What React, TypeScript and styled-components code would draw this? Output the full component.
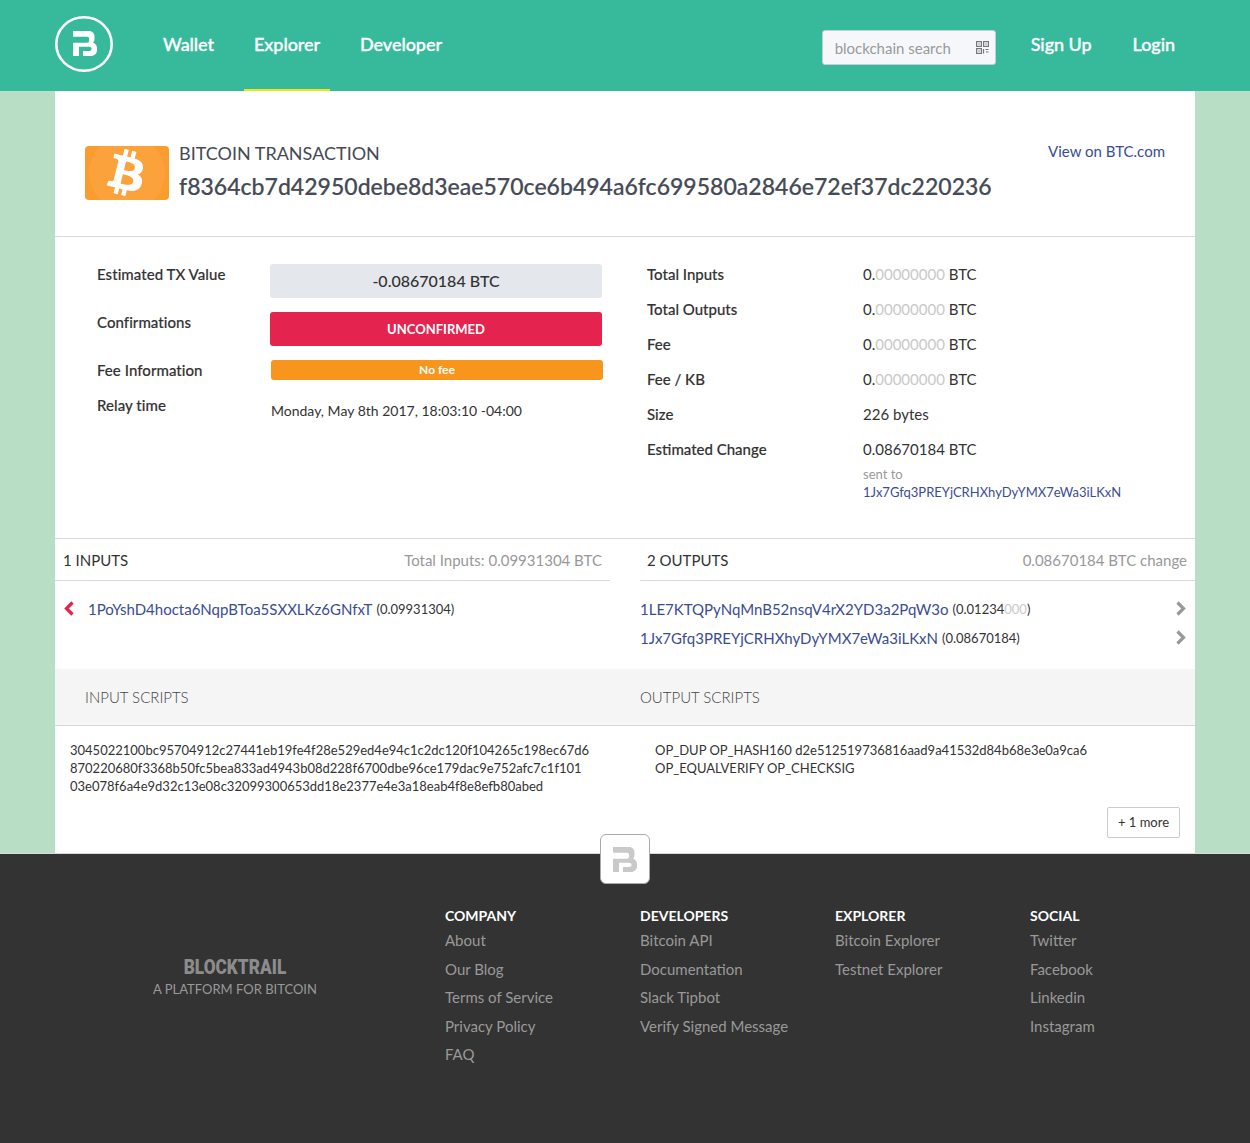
import React from "react";
import styled, { createGlobalStyle } from "styled-components";
import { FaBtc } from "react-icons/fa";

const Global = createGlobalStyle`
  html, body { margin: 0; padding: 0; background: #b8dfc5; }
  body { font-family: Lato, "Open Sans", sans-serif; color: #333; font-size: 15px; }
  * { box-sizing: border-box; }
  a { text-decoration: none; color: inherit; }
`;

const Header = styled.header`
  height: 91px; background: #37b99c; display: flex; align-items: stretch;
  padding: 0 55px; color: #fff;
`;
const LogoMark = styled.a`display: flex; align-items: center; width: 58px; margin-right: 40px; padding-bottom: 3px;`;
const Nav = styled.nav`display: flex; align-items: stretch; gap: 20px;`;
const NavLink = styled.a<{ $active?: boolean }>`
  display: flex; align-items: center; padding: 0 10px 2px; font-size: 18px; font-weight: 500;
  letter-spacing: -0.05px;
  -webkit-text-stroke: 0.35px #fff;
  border-bottom: 2px solid ${p => (p.$active ? "#e8e81a" : "transparent")};
  color: #fff;
`;
const HeaderRight = styled.div`margin-left: auto; display: flex; align-items: stretch; gap: 21px; margin-right: 10px;`;
const Search = styled.div`
  align-self: flex-start; margin: 30px 4px 0 0; width: 174px; height: 35px; background: #f5f7fb;
  border: 1px solid #c8ccd0; border-radius: 3px; display: flex; align-items: center;
  justify-content: space-between; padding: 0 6px 0 12px; font-size: 15px; color: #9a9a9a;
`;

const Main = styled.main`width: 1140px; margin: 0 auto; background: #fff;`;
const TitleBar = styled.section`
  height: 146px; border-bottom: 1px solid #d9d9d9; display: flex; align-items: flex-start;
  padding: 51px 30px 0;
`;
const CoinBadge = styled.div`
  width: 84px; height: 54px; margin-top: 4px; border-radius: 4px; background: #fa9c2e;
  display: flex; align-items: center; justify-content: center; color: #fff; font-size: 46px;
  overflow: hidden; position: relative; margin-right: 10px;
  &::before { content: ""; position: absolute; width: 76px; height: 76px; border-radius: 50%; background: #fba23c; top: -11px; left: 4px; }
  svg { position: relative; transform: rotate(14deg); }
`;
const TitleText = styled.div`flex: 1;`;
const Kicker = styled.div`font-size: 18px; line-height: 22px; color: #454a56;`;
const TxHash = styled.div`font-size: 23px; line-height: 30px; font-weight: 500; color: #454a56; margin-top: 7px; letter-spacing: 0.02px; -webkit-text-stroke: 0.2px #454a56;`;
const Link = styled.a`color: #3a4d92;`;
const ViewLink = styled(Link)`font-size: 15px; line-height: 20px; margin-top: -1px;`;

const Details = styled.section`display: grid; grid-template-columns: 555px 555px; gap: 30px; height: 301px; padding-top: 27px;`;
const LeftDetails = styled.div`display: flex; flex-direction: column; padding-left: 42px;`;
const LeftRow = styled.div<{ $h: number }>`display: grid; grid-template-columns: 173px 332px; height: ${p => p.$h}px;`;
const Label = styled.div`font-size: 15px; line-height: 22px; font-weight: 500; color: #333; -webkit-text-stroke: 0.15px #333;`;
const LeftLabel = styled(Label)`margin-top: -1px; letter-spacing: 0.05px;`;
const Pill = styled.div<{ $bg: string; $fg: string; $bold?: boolean; $size: number; $h: number; $shift?: number; $lift: number }>`
  background: ${p => p.$bg}; color: ${p => p.$fg}; height: ${p => p.$h}px; border-radius: 3px;
  display: flex; align-items: center; justify-content: center; font-size: ${p => p.$size}px;
  font-weight: ${p => (p.$bold ? 700 : 500)}; margin-left: ${p => p.$shift ?? 0}px;
  width: 332px; padding-bottom: ${p => p.$lift}px;
`;
const Relay = styled.div`font-size: 14px; line-height: 20px; margin: 6px 0 0 1px; color: #333;`;

const RightDetails = styled.div`padding-left: 7px; margin-top: -1px; display: flex; flex-direction: column;`;
const RightRow = styled.div`display: grid; grid-template-columns: 216px 1fr; height: 35px; align-items: start;`;
const Value = styled.div`font-size: 15px; line-height: 22px; color: #333;`;
const Faint = styled.span`color: #c9c9c9;`;
const Sent = styled.div`margin-left: 216px; font-size: 13px; line-height: 17px; color: #999; margin-top: -7px;`;
const SentLink = styled(Link)`display: block; font-size: 13px; line-height: 17px; margin-top: 1px;`;

const Columns = styled.section`display: grid; grid-template-columns: 555px 555px; gap: 30px; border-top: 1px solid #d9d9d9; height: 131px;`;
const ColumnHead = styled.div<{ $pad: number }>`
  height: 42px; border-bottom: 1px solid #d9d9d9; display: flex; align-items: center;
  justify-content: space-between; padding: 1px 8px 0 ${p => p.$pad}px; font-size: 15px; color: #333;
`;
const HeadNote = styled.span`color: #999; font-size: 15px;`;
const Rows = styled.div`padding-top: 13px; display: flex; flex-direction: column;`;
const TxRow = styled.div`display: flex; align-items: center; height: 29px; font-size: 13px; color: #333;`;
const Address = styled(Link)`font-size: 15px; margin-right: 4px;`;
const ArrowLeft = styled.span`display: flex; width: 33px; padding-left: 9px;`;
const ArrowRight = styled.span`display: flex; margin-left: auto; margin-right: 9px;`;

const ScriptHead = styled.section`
  display: grid; grid-template-columns: 555px 555px; gap: 30px; height: 57px; background: #f5f5f5;
  border-bottom: 1px solid #d9d9d9; font-size: 15px; font-weight: 300; color: #444;
`;
const ScriptTitle = styled.div<{ $pad: number }>`padding-left: ${p => p.$pad}px; display: flex; align-items: center;`;
const Scripts = styled.section`display: grid; grid-template-columns: 555px 555px; gap: 30px; height: 127px; position: relative; padding-top: 15px;`;
const ScriptText = styled.div<{ $pad: number }>`padding-left: ${p => p.$pad}px; font-size: 13px; line-height: 18px; color: #333;`;
const ScriptLine = styled.div`white-space: nowrap;`;
const MoreWrap = styled.div`position: absolute; right: 15px; top: 81px;`;
const More = styled.button`
  width: 73px; height: 31px; background: #fff; border: 1px solid #ccc; border-radius: 2px;
  font: 13px Lato, sans-serif; color: #333; padding: 0 0 2px;
`;

const Footer = styled.footer`
  height: 290px; background: #333; border-top: 1px solid #d9d9d9; position: relative;
  display: grid; grid-template-columns: 360px repeat(4, 195px); padding: 52px 0 0 85px;
`;
const Badge = styled.div`
  position: absolute; left: 600px; top: -20px; width: 50px; height: 50px; background: #fff;
  border: 1px solid #aaa; border-radius: 6px; display: flex; align-items: center; justify-content: center;
`;
const Brand = styled.div`width: 300px; margin-top: 49px; text-align: center; color: #999;`;
const BrandName = styled.div`
  font: 900 21px/24px Roboto, sans-serif; color: #8c8c8c; transform: scaleX(0.82);
`;
const BrandTag = styled.div`font-size: 13px; line-height: 20px; color: #999;`;
const FootCol = styled.div`display: flex; flex-direction: column;`;
const FootHead = styled.div`font-size: 14px; line-height: 20px; font-weight: 700; color: #fff; height: 20px;`;
const FootLink = styled.a`font-size: 15px; line-height: 28.5px; color: #999;`;

const B_PATH = "M0 0H16C19.500 0 21.500 2.500 21.500 5.500V8C21.500 9.500 21 10.500 20 11.500C22.500 12.500 24 14.500 24 17V19C24 22.500 21.500 25 18 25H10V20H16C17.500 20 18.500 19 18.500 18V17.500C18.500 16.500 17.500 15.700 16 15.700H6V25H0V11.700H14C15.300 11.700 16 11 16 9.800V7.500C16 6.500 15.300 5.700 14 5.700H0Z";

const BMark = ({ color }: { color: string }) => (
  <svg width="24" height="25" viewBox="0 0 24 25" fill={color}>
    <path d={B_PATH} />
  </svg>
);

const Chevron = ({ dir, color }: { dir: "left" | "right"; color: string }) => (
  <svg width="10" height="15" viewBox="0 0 10 15" fill="none" stroke={color} strokeWidth="3.200">
    <path d={dir === "left" ? "M8.500 1.500L2.500 7.500L8.500 13.500" : "M1.500 1.500L7.500 7.500L1.500 13.500"} />
  </svg>
);

const Qr = () => (
  <svg width="13" height="13" viewBox="0 0 13 13" fill="none" stroke="#777" strokeWidth="1.200">
    <rect x="0.600" y="0.600" width="4.800" height="4.800" />
    <rect x="7.600" y="0.600" width="4.800" height="4.800" />
    <rect x="0.600" y="7.600" width="4.800" height="4.800" />
    <rect x="2.400" y="2.400" width="1.200" height="1.200" fill="#777" stroke="none" />
    <rect x="9.400" y="2.400" width="1.200" height="1.200" fill="#777" stroke="none" />
    <rect x="2.400" y="9.400" width="1.200" height="1.200" fill="#777" stroke="none" />
    <path d="M7.500 8v4.500M9.500 8.500h3M10 11h2.500" />
  </svg>
);

const Zeros = () => (<>0.<Faint>00000000</Faint> BTC</>);

const rightRows: [string, React.ReactNode][] = [
  ["Total Inputs", <Zeros />],
  ["Total Outputs", <Zeros />],
  ["Fee", <Zeros />],
  ["Fee / KB", <Zeros />],
  ["Size", "226 bytes"],
  ["Estimated Change", "0.08670184 BTC"],
];

const footer = [
  { head: "COMPANY", links: ["About", "Our Blog", "Terms of Service", "Privacy Policy", "FAQ"] },
  { head: "DEVELOPERS", links: ["Bitcoin API", "Documentation", "Slack Tipbot", "Verify Signed Message"] },
  { head: "EXPLORER", links: ["Bitcoin Explorer", "Testnet Explorer"] },
  { head: "SOCIAL", links: ["Twitter", "Facebook", "Linkedin", "Instagram"] },
];

export default function App() {
  return (
    <>
      <Global />
      <Header>
        <LogoMark href="#">
          <svg width="58" height="56" viewBox="0 0 58 56">
            <ellipse cx="29" cy="28" rx="27.700" ry="26.700" fill="none" stroke="#fff" strokeWidth="2.600" />
            <path transform="translate(18 15)" fill="#fff" d={B_PATH} />
          </svg>
        </LogoMark>
        <Nav>
          <NavLink href="#">Wallet</NavLink>
          <NavLink href="#" $active>Explorer</NavLink>
          <NavLink href="#">Developer</NavLink>
        </Nav>
        <HeaderRight>
          <Search>blockchain search<Qr /></Search>
          <NavLink href="#">Sign Up</NavLink>
          <NavLink href="#">Login</NavLink>
        </HeaderRight>
      </Header>
      <Main>
        <TitleBar>
          <CoinBadge><FaBtc /></CoinBadge>
          <TitleText>
            <Kicker>BITCOIN TRANSACTION</Kicker>
            <TxHash>f8364cb7d42950debe8d3eae570ce6b494a6fc699580a2846e72ef37dc220236</TxHash>
          </TitleText>
          <ViewLink href="#">View on BTC.com</ViewLink>
        </TitleBar>
        <Details>
          <LeftDetails>
            <LeftRow $h={48}>
              <LeftLabel>Estimated TX Value</LeftLabel>
              <Pill $bg="#e4e7ec" $fg="#333" $size={16} $h={34} $lift={2}>-0.08670184 BTC</Pill>
            </LeftRow>
            <LeftRow $h={48}>
              <LeftLabel>Confirmations</LeftLabel>
              <Pill $bg="#e5234f" $fg="#fff" $bold $size={13} $h={34} $lift={0}>UNCONFIRMED</Pill>
            </LeftRow>
            <LeftRow $h={35}>
              <LeftLabel>Fee Information</LeftLabel>
              <Pill $bg="#f8951d" $fg="#fff" $bold $size={12} $h={20} $shift={1} $lift={2}>No fee</Pill>
            </LeftRow>
            <LeftRow $h={40}>
              <LeftLabel>Relay time</LeftLabel>
              <Relay>Monday, May 8th 2017, 18:03:10 -04:00</Relay>
            </LeftRow>
          </LeftDetails>
          <RightDetails>
            {rightRows.map(([label, value]) => (
              <RightRow key={label}>
                <Label>{label}</Label>
                <Value>{value}</Value>
              </RightRow>
            ))}
            <Sent>
              sent to
              <SentLink href="#">1Jx7Gfq3PREYjCRHXhyDyYMX7eWa3iLKxN</SentLink>
            </Sent>
          </RightDetails>
        </Details>
        <Columns>
          <div>
            <ColumnHead $pad={8}>
              <span>1 INPUTS</span>
              <HeadNote>Total Inputs: 0.09931304 BTC</HeadNote>
            </ColumnHead>
            <Rows>
              <TxRow>
                <ArrowLeft><Chevron dir="left" color="#e5234f" /></ArrowLeft>
                <Address href="#">1PoYshD4hocta6NqpBToa5SXXLKz6GNfxT</Address>
                (0.09931304)
              </TxRow>
            </Rows>
          </div>
          <div>
            <ColumnHead $pad={7}>
              <span>2 OUTPUTS</span>
              <HeadNote>0.08670184 BTC change</HeadNote>
            </ColumnHead>
            <Rows>
              <TxRow>
                <Address href="#">1LE7KTQPyNqMnB52nsqV4rX2YD3a2PqW3o</Address>
                (0.01234<Faint>000</Faint>)
                <ArrowRight><Chevron dir="right" color="#999" /></ArrowRight>
              </TxRow>
              <TxRow>
                <Address href="#">1Jx7Gfq3PREYjCRHXhyDyYMX7eWa3iLKxN</Address>
                (0.08670184)
                <ArrowRight><Chevron dir="right" color="#999" /></ArrowRight>
              </TxRow>
            </Rows>
          </div>
        </Columns>
        <ScriptHead>
          <ScriptTitle $pad={30}>INPUT SCRIPTS</ScriptTitle>
          <ScriptTitle $pad={0}>OUTPUT SCRIPTS</ScriptTitle>
        </ScriptHead>
        <Scripts>
          <ScriptText $pad={15}>
            <ScriptLine>3045022100bc95704912c27441eb19fe4f28e529ed4e94c1c2dc120f104265c198ec67d6</ScriptLine>
            <ScriptLine>870220680f3368b50fc5bea833ad4943b08d228f6700dbe96ce179dac9e752afc7c1f101</ScriptLine>
            <ScriptLine>03e078f6a4e9d32c13e08c32099300653dd18e2377e4e3a18eab4f8e8efb80abed</ScriptLine>
          </ScriptText>
          <ScriptText $pad={15}>
            <ScriptLine>OP_DUP OP_HASH160 d2e512519736816aad9a41532d84b68e3e0a9ca6</ScriptLine>
            <ScriptLine>OP_EQUALVERIFY OP_CHECKSIG</ScriptLine>
          </ScriptText>
          <MoreWrap><More>+ 1 more</More></MoreWrap>
        </Scripts>
      </Main>
      <Footer>
        <Badge><BMark color="#c9c9c9" /></Badge>
        <Brand>
          <BrandName>BLOCKTRAIL</BrandName>
          <BrandTag>A PLATFORM FOR BITCOIN</BrandTag>
        </Brand>
        {footer.map(col => (
          <FootCol key={col.head}>
            <FootHead>{col.head}</FootHead>
            {col.links.map(l => <FootLink key={l} href="#">{l}</FootLink>)}
          </FootCol>
        ))}
      </Footer>
    </>
  );
}
